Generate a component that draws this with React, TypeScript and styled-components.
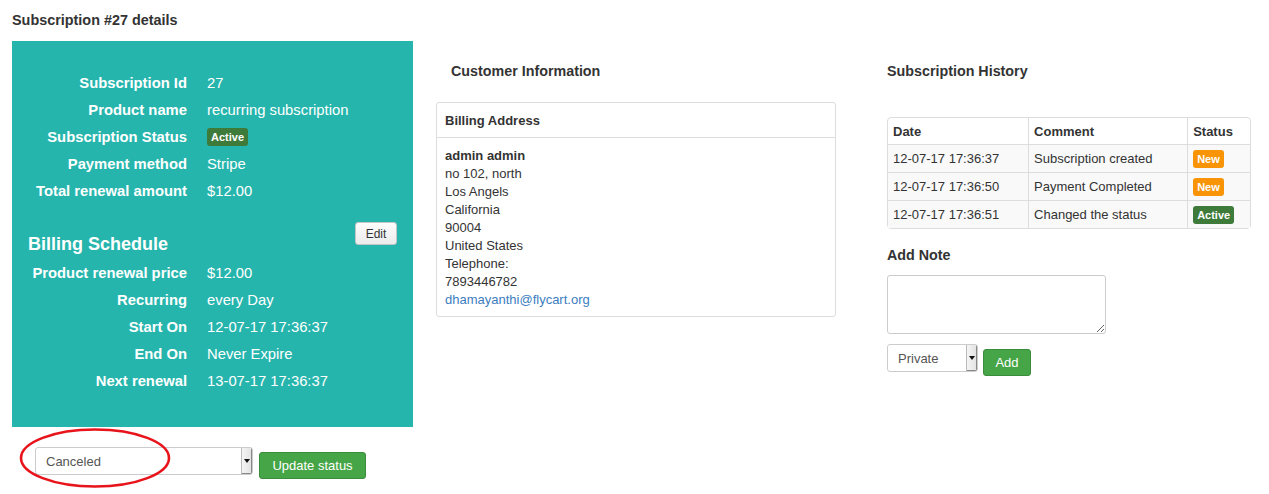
import React from "react";
import styled, { createGlobalStyle } from "styled-components";

const Global = createGlobalStyle`
  html, body { margin: 0; padding: 0; background: #fff; }
  body { font-family: "Liberation Sans", Arial, sans-serif; color: #333; font-size: 13px; }
  * { box-sizing: border-box; }
`;

const Page = styled.div`
  padding: 10px 0 0 12px;
  width: 1269px;
  min-height: 494px;
`;

const Title = styled.h3`
  margin: 0;
  font-size: 14.4px;
  line-height: 20px;
  font-weight: bold;
  color: #333;
`;

const Columns = styled.div`
  display: grid;
  grid-template-columns: 401px 400px 364px;
  column-gap: 23px;
  margin-top: 11px;
  & > :nth-child(3) { margin-left: 28px; }
`;

const LeftCol = styled.div`
  position: relative;
`;

const TealPanel = styled.div`
  background: #26b5ad;
  color: #fff;
  padding: 28px 16px 33px 16px;
  height: 386px;
`;

const InfoRow = styled.div`
  display: grid;
  grid-template-columns: 159px 1fr;
  column-gap: 20px;
  height: 27px;
  align-items: center;
  font-size: 14.8px;
`;

const InfoLabel = styled.div`
  font-weight: bold;
  text-align: right;
`;

const InfoValue = styled.div``;

const Badge = styled.span<{ $tone: "success" | "warning" }>`
  display: inline-block;
  background: ${(p) => (p.$tone === "success" ? "#3e7a3a" : "#f89406")};
  color: #fff;
  font-size: 11px;
  font-weight: bold;
  line-height: 14px;
  padding: 2px 4px;
  border-radius: 3px;
  vertical-align: middle;
`;

const ScheduleHeader = styled.div`
  display: flex;
  justify-content: space-between;
  align-items: flex-start;
  margin-top: 18px;
  height: 34px;
  margin-bottom: 3px;
`;

const ScheduleTitle = styled.h3`
  margin: 10px 0 0 0;
  font-size: 18px;
  line-height: 24px;
  font-weight: bold;
`;

const EditButton = styled.button`
  height: 23px;
  width: 42px;
  padding: 0;
  font-family: "Liberation Sans", Arial, sans-serif;
  font-size: 12px;
  color: #333;
  background: linear-gradient(#fdfdfd, #ececec);
  border: 1px solid #c5c5c5;
  border-radius: 3px;
`;

const StatusBar = styled.div`
  display: flex;
  align-items: flex-start;
  gap: 6px;
  margin: 20px 0 0 23px;
`;

const FakeSelect = styled.div<{ $w: number }>`
  display: flex;
  width: ${(p) => p.$w}px;
  height: 28px;
  border: 1px solid #ccc;
  border-radius: 3px;
  background: #fff;
  font-size: 13px;
  color: #555;
  overflow: hidden;
`;

const SelectText = styled.span`
  flex: 1;
  display: flex;
  align-items: center;
  padding-left: 10px;
`;

const SelectArrow = styled.span`
  width: 11px;
  display: flex;
  align-items: center;
  justify-content: center;
  background: linear-gradient(to right, #f4f4f4, #e2e2e2);
  border-left: 1px solid #bbb;
  box-shadow: inset -1px -1px 0 #888;
  &::after {
    content: "";
    border-left: 3px solid transparent;
    border-right: 3px solid transparent;
    border-top: 4px solid #111;
  }
`;

const GreenButton = styled.button<{ $w: number }>`
  margin-top: 5px;
  height: 27px;
  width: ${(p) => p.$w}px;
  padding: 0;
  font-family: "Liberation Sans", Arial, sans-serif;
  font-size: 13px;
  color: #fff;
  background: #46a546;
  border: 1px solid #3b8c3b;
  border-radius: 3px;
`;

const Ellipse = styled.svg`
  position: absolute;
  left: 7px;
  top: 387px;
  overflow: visible;
  display: block;
`;

const MidCol = styled.div``;

const SectionHeading = styled.h4<{ $indent?: number }>`
  margin: 20px 0 0 0;
  padding-left: ${(p) => p.$indent ?? 0}px;
  font-size: 14.3px;
  line-height: 20px;
  font-weight: bold;
  color: #333;
`;

const AddressPanel = styled.div`
  margin-top: 21px;
  border: 1px solid #ddd;
  border-radius: 3px;
`;

const AddressHeader = styled.div`
  height: 35px;
  display: flex;
  align-items: center;
  padding-left: 8px;
  font-weight: bold;
  border-bottom: 1px solid #ddd;
`;

const AddressBody = styled.div`
  padding: 9px 8px 7px 8px;
  line-height: 18px;
`;

const Strong = styled.div`
  font-weight: bold;
`;

const Mail = styled.a`
  color: #3c7dc0;
  text-decoration: none;
`;

const RightCol = styled.div``;

const HistoryTable = styled.table`
  margin-top: 36px;
  width: 364px;
  border-collapse: separate;
  border-spacing: 0;
  border: 1px solid #ddd;
  border-radius: 4px;
  font-size: 13px;
  th, td {
    text-align: left;
    padding: 0 5px;
    border-left: 1px solid #ddd;
  }
  th:first-child, td:first-child { border-left: 0; }
  th { height: 26px; font-weight: bold; }
  td { height: 28px; border-top: 1px solid #ddd; background: #f9f9f9; }
`;

const AddNoteHeading = styled.h4`
  margin: 16px 0 0 0;
  font-size: 14.3px;
  line-height: 20px;
  font-weight: bold;
`;

const NoteArea = styled.textarea`
  display: block;
  margin-top: 10px;
  width: 219px;
  height: 59px;
  border: 1px solid #ccc;
  border-radius: 3px;
  resize: both;
`;

const NoteBar = styled.div`
  display: flex;
  align-items: flex-start;
  gap: 5px;
  margin-top: 10px;
`;

const rows = [
  ["Subscription Id", "27"],
  ["Product name", "recurring subscription"],
  ["Subscription Status", null],
  ["Payment method", "Stripe"],
  ["Total renewal amount", "$12.00"],
];

const schedule = [
  ["Product renewal price", "$12.00"],
  ["Recurring", "every Day"],
  ["Start On", "12-07-17 17:36:37"],
  ["End On", "Never Expire"],
  ["Next renewal", "13-07-17 17:36:37"],
];

const history: [string, string, "warning" | "success", string][] = [
  ["12-07-17 17:36:37", "Subscription created", "warning", "New"],
  ["12-07-17 17:36:50", "Payment Completed", "warning", "New"],
  ["12-07-17 17:36:51", "Changed the status", "success", "Active"],
];

export default function App() {
  return (
    <Page>
      <Global />
      <Title>Subscription #27 details</Title>
      <Columns>
        <LeftCol>
          <TealPanel>
            {rows.map(([l, v]) => (
              <InfoRow key={l as string}>
                <InfoLabel>{l}</InfoLabel>
                <InfoValue>{v ?? <Badge $tone="success">Active</Badge>}</InfoValue>
              </InfoRow>
            ))}
            <ScheduleHeader>
              <ScheduleTitle>Billing Schedule</ScheduleTitle>
              <EditButton>Edit</EditButton>
            </ScheduleHeader>
            {schedule.map(([l, v]) => (
              <InfoRow key={l}>
                <InfoLabel>{l}</InfoLabel>
                <InfoValue>{v}</InfoValue>
              </InfoRow>
            ))}
          </TealPanel>
          <StatusBar>
            <FakeSelect $w={218}>
              <SelectText>Canceled</SelectText>
              <SelectArrow />
            </FakeSelect>
            <GreenButton $w={107}>Update status</GreenButton>
          </StatusBar>
          <Ellipse width="152" height="60" viewBox="0 0 152 60">
            <ellipse cx="76" cy="30" rx="74" ry="28.5" fill="none" stroke="#e8141b" strokeWidth="2.6" />
          </Ellipse>
        </LeftCol>
        <MidCol>
          <SectionHeading $indent={15}>Customer Information</SectionHeading>
          <AddressPanel>
            <AddressHeader>Billing Address</AddressHeader>
            <AddressBody>
              <Strong>admin admin</Strong>
              <div>no 102, north</div>
              <div>Los Angels</div>
              <div>California</div>
              <div>90004</div>
              <div>United States</div>
              <div>Telephone:</div>
              <div>7893446782</div>
              <Mail href="#">dhamayanthi@flycart.org</Mail>
            </AddressBody>
          </AddressPanel>
        </MidCol>
        <RightCol>
          <SectionHeading>Subscription History</SectionHeading>
          <HistoryTable>
            <colgroup>
              <col style={{ width: 141 }} />
              <col style={{ width: 160 }} />
              <col style={{ width: 63 }} />
            </colgroup>
            <thead>
              <tr>
                <th>Date</th>
                <th>Comment</th>
                <th>Status</th>
              </tr>
            </thead>
            <tbody>
              {history.map(([d, c, t, s]) => (
                <tr key={d}>
                  <td>{d}</td>
                  <td>{c}</td>
                  <td>
                    <Badge $tone={t}>{s}</Badge>
                  </td>
                </tr>
              ))}
            </tbody>
          </HistoryTable>
          <AddNoteHeading>Add Note</AddNoteHeading>
          <NoteArea />
          <NoteBar>
            <FakeSelect $w={91}>
              <SelectText>Private</SelectText>
              <SelectArrow />
            </FakeSelect>
            <GreenButton $w={48}>Add</GreenButton>
          </NoteBar>
        </RightCol>
      </Columns>
    </Page>
  );
}
